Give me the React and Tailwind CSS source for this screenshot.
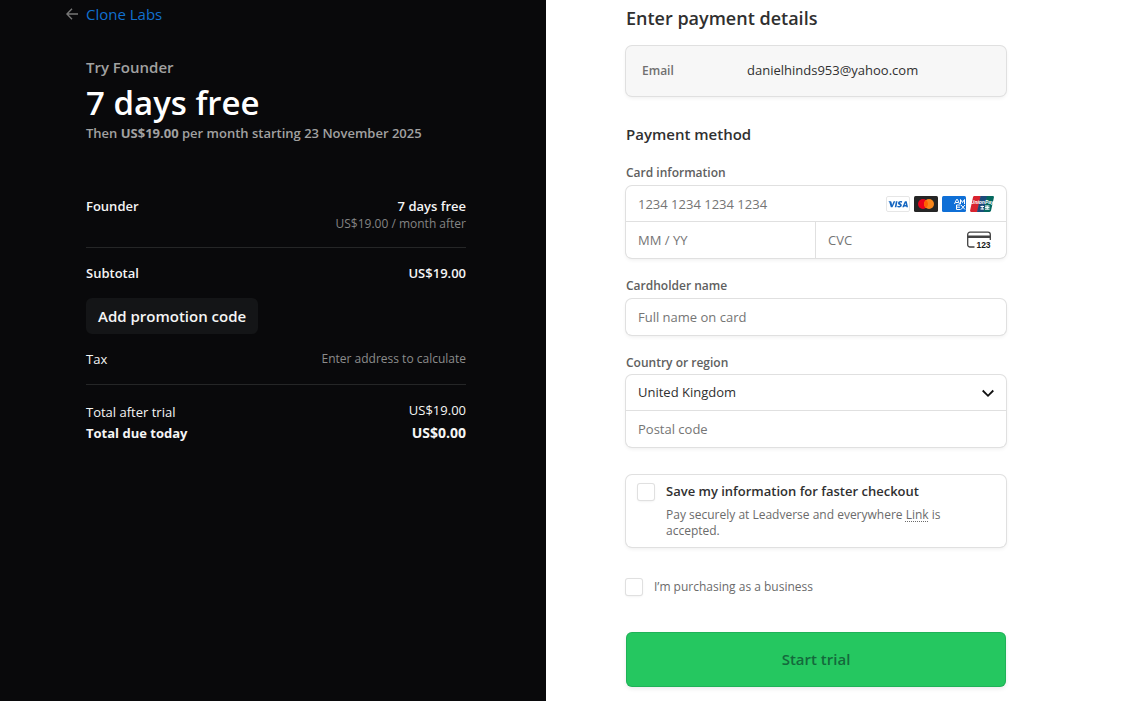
import React, { useState } from "react";

const VisaIcon = () => (
  <svg viewBox="0 0 24 16" className="w-6 h-4" role="img" aria-label="Visa">
    <rect x="0.5" y="0.5" width="23" height="15" rx="1.5" fill="#fff" stroke="#e6e6e6" />
    <path d="M2.600 5.200h2.100c.4 0 .6.200.7.600l.7 3.200L7.600 5.200h1.700L6.500 11.300H4.800L3.400 6.400c0-.2-.2-.4-.8-.6z" fill="#1465c0" />
    <path d="M9.900 5.200h1.600l-1.100 6.100H8.800z" fill="#1465c0" />
    <path d="M16.200 5.400l-.3 1.300c-1-.4-2.100-.4-2.100.1 0 .7 2 .8 2 2.400 0 1.400-1.200 2.200-2.700 2.200-.9 0-1.600-.2-1.900-.4l.3-1.300c.9.500 2.500.600 2.500-.1 0-.8-2-.8-2-2.300 0-1.300 1.200-2.200 2.600-2.200.7 0 1.300.1 1.600.3z" fill="#1465c0" />
    <path d="M19.200 5.200h1.500l1.300 6.100h-1.500l-.2-.9h-2l-.4.900h-1.600l2.300-5.500c.1-.4.3-.6.600-.6zm.3 1.900l-.8 2h1.200z" fill="#1465c0" />
  </svg>
);

const MastercardIcon = () => (
  <svg viewBox="0 0 24 16" className="w-6 h-4" role="img" aria-label="Mastercard">
    <rect width="24" height="16" rx="1.5" fill="#252525" />
    <circle cx="9" cy="8" r="5" fill="#eb001b" />
    <circle cx="15" cy="8" r="5" fill="#f7861b" />
    <path d="M12 4a5 5 0 0 1 0 8 5 5 0 0 1 0-8z" fill="#ff5f00" />
  </svg>
);

const AmexIcon = () => (
  <svg viewBox="0 0 24 16" className="w-6 h-4" role="img" aria-label="American Express">
    <rect width="24" height="16" rx="1.5" fill="#0f6fd6" />
    <g fill="none" stroke="#fff" strokeWidth="1">
      <path d="M12.500 8l2-4.500h1l2 4.500M13.500 6.500h3" />
      <path d="M18.500 8V3.500l2 3 2-3V8" />
      <path d="M18.500 9h-4v4.500h4M14.500 11.200h3.500" />
      <path d="M19 9l4 4.500M23 9l-4 4.500" />
    </g>
  </svg>
);

const UnionPayIcon = () => (
  <svg viewBox="0 0 24 16" className="w-6 h-4" role="img" aria-label="UnionPay">
    <path d="M4.500 0H11L7.500 16H1.200C.4 16-.1 15.300.1 14.500L3 1.200C3.200.5 3.800 0 4.500 0z" fill="#d8232f" />
    <path d="M10.500 0h7L14 16H7z" fill="#1c4a7b" />
    <path d="M17 0h5.800c.8 0 1.300.7 1.100 1.500L21 14.800c-.2.700-.8 1.200-1.500 1.200h-6z" fill="#04685f" />
    <text x="12.300" y="8.300" textAnchor="middle" fontSize="5" fontWeight="700" fontStyle="italic" fill="#fff" fontFamily="Liberation Sans, sans-serif">
      UnionPay
    </text>
    <path d="M10.500 10.500h3.500M12.200 9.700v3.600M10.500 13h3.500M15 10h4.500M15 11.600h4.500M17.200 9.700v3.600M15 13.200h4.500" stroke="#fff" strokeWidth="1" fill="none" />
  </svg>
);

const CvcIcon = () => (
  <svg viewBox="0 0 24 18" className="w-6 h-[18px] shrink-0" aria-hidden="true">
    <path d="M7.500 16H3A2.300 2.300 0 0 1 .7 13.700V3.500A2.300 2.300 0 0 1 3 1.200h18a2.300 2.300 0 0 1 2.300 2.300V9" fill="none" stroke="#424242" strokeWidth="1.300" />
    <path d="M.7 4.500h22.600v2.500H.7z" fill="#424242" />
    <text x="16.500" y="17" textAnchor="middle" fontSize="8.500" fontWeight="700" fill="#1a1a1a" fontFamily="Liberation Sans, sans-serif">
      123
    </text>
  </svg>
);

const box = "rounded-md ring-1 ring-[#e0e0e0] shadow-[0_2px_4px_rgba(0,0,0,0.07)]";
const field =
  "block w-full px-3 bg-transparent text-[13px] text-[#303030] placeholder:text-[#757575] outline-none";
const label = "block text-xs leading-4 font-semibold text-[#606060]";
const checkbox =
  "appearance-none block size-4 shrink-0 rounded-xs bg-white ring-1 ring-[#e0e0e0] shadow-[0_1px_3px_rgba(0,0,0,0.1)] checked:bg-[#0074d4]";

const Summary = () => (
  <section className="flex justify-end bg-[#09090b] pl-5 pr-20">
    <div className="w-full max-w-[400px] pt-1 text-[13px] leading-5 text-[#f5f5f5]">
      <a href="#" className="flex items-center gap-2 text-[15px] text-[#1170cf]">
        <svg viewBox="0 0 12 12" className="size-3" fill="none" stroke="#777" strokeWidth="1.4" aria-hidden="true">
          <path d="M12 6H1M6 .8L.9 6 6 11.200" />
        </svg>
        Clone Labs
      </a>

      <div className="pl-5">
        <p className="mt-[31px] text-[15px] leading-6 font-semibold text-[#a1a1a1]">Try Founder</p>
        <h1 className="mt-1 text-[33px] leading-10 font-semibold text-white">7 days free</h1>
        <p className="font-semibold text-[#a1a1a1]">
          Then <span className="font-bold">US$19.00</span> per month starting 23 November 2025
        </p>

        <div className="mt-[53px] flex justify-between font-semibold">
          <span>Founder</span>
          <span>7 days free</span>
        </div>
        <p className="text-right text-xs leading-4 text-[#848484]">US$19.00 / month after</p>

        <div className="mt-[15px] border-t border-[#252627] pt-[15px] flex justify-between font-semibold">
          <span>Subtotal</span>
          <span>US$19.00</span>
        </div>
        <button type="button" className="mt-[15px] h-9 px-3 rounded-md bg-[#141517] text-[15px] font-semibold">
          Add promotion code
        </button>
        <div className="mt-[15px] flex justify-between">
          <span>Tax</span>
          <span className="text-xs leading-5 text-[#8c8c8c]">Enter address to calculate</span>
        </div>

        <div className="mt-[15px] border-t border-[#252627] pt-[15px] flex justify-between">
          <span className="pt-0.5">Total after trial</span>
          <span>US$19.00</span>
        </div>
        <div className="mt-px flex justify-between font-bold">
          <span>Total due today</span>
          <span className="text-sm leading-5">US$0.00</span>
        </div>
      </div>
    </div>
  </section>
);

const App = () => {
  const [country, setCountry] = useState("United Kingdom");
  const countries = ["United Kingdom", "United States", "Ireland", "France", "Germany"];

  return (
    <main className="grid min-h-screen grid-cols-[546fr_577fr] bg-white font-['Open_Sans','Noto_Sans',sans-serif]">
      <Summary />

      <form className="pl-20 pr-5 pb-3" onSubmit={(e) => e.preventDefault()}>
        <div className="w-full max-w-[380px]">
          <h2 className="pt-1.5 text-lg leading-6 font-semibold text-[#303030]">Enter payment details</h2>
          <div className={`mt-4 flex h-[50px] items-center px-4 bg-[#f7f7f7] ${box}`}>
            <span className="w-[105px] text-xs font-semibold text-[#707070]">Email</span>
            <span className="text-[13px] text-[#303030]">danielhinds953@yahoo.com</span>
          </div>

          <h3 className="mt-7 text-[15px] leading-5 font-semibold text-[#303030]">Payment method</h3>

          <label htmlFor="card-number" className={`mt-[21px] ${label}`}>Card information</label>
          <div className={`mt-[5px] ${box}`}>
            <div className="flex h-9 items-center border-b border-[#e0e0e0] pr-3">
              <input id="card-number" className={`h-full ${field}`} placeholder="1234 1234 1234 1234" />
              <div className="flex shrink-0 gap-1">
                <VisaIcon />
                <MastercardIcon />
                <AmexIcon />
                <UnionPayIcon />
              </div>
            </div>
            <div className="grid grid-cols-2">
              <input aria-label="Expiry date" className={`h-9 border-r border-[#e0e0e0] ${field}`} placeholder="MM / YY" />
              <div className="flex items-center pr-[15px]">
                <input aria-label="CVC" className={`h-9 ${field}`} placeholder="CVC" />
                <CvcIcon />
              </div>
            </div>
          </div>

          <label htmlFor="name" className={`mt-5 ${label}`}>Cardholder name</label>
          <div className={`mt-[5px] ${box}`}>
            <input id="name" className={`h-9 ${field}`} placeholder="Full name on card" />
          </div>

          <label htmlFor="country" className={`mt-5 ${label}`}>Country or region</label>
          <div className={`mt-1 ${box}`}>
            <div className="relative h-9 border-b border-[#e0e0e0]">
              <select
                id="country"
                value={country}
                onChange={(e) => setCountry(e.target.value)}
                className={`h-full appearance-none ${field}`}
              >
                {countries.map((name) => (
                  <option key={name}>{name}</option>
                ))}
              </select>
              <svg
                viewBox="0 0 12 12"
                className="pointer-events-none absolute right-3 top-3 size-3"
                fill="none"
                stroke="#111"
                strokeWidth="1.8"
                aria-hidden="true"
              >
                <path d="M.7 3.500L6 8.800l5.300-5.300" />
              </svg>
            </div>
            <input aria-label="Postal code" className={`h-9 ${field}`} placeholder="Postal code" />
          </div>

          <div className={`mt-7 flex gap-3 px-3 pt-2 pb-2 ${box}`}>
            <input id="save-info" type="checkbox" className={`mt-px ${checkbox}`} />
            <div>
              <label htmlFor="save-info" className="block text-[13px] leading-4 font-semibold text-[#303030]">
                Save my information for faster checkout
              </label>
              <p className="mt-2 max-w-[300px] text-xs leading-4 text-[#6b6b6b]">
                Pay securely at Leadverse and everywhere{" "}
                <a href="#" className="underline decoration-dotted underline-offset-2">Link</a> is accepted.
              </p>
            </div>
          </div>

          <div className="mt-8 flex items-center gap-3">
            <input id="business" type="checkbox" className={checkbox} />
            <label htmlFor="business" className="text-xs leading-4 text-[#6b6b6b]">
              I’m purchasing as a business
            </label>
          </div>

          <button
            type="submit"
            className="mt-[37px] h-[55px] w-full rounded-md bg-[#25c760] text-[15px] font-semibold text-[#14693c] shadow-[inset_0_0_0_1px_rgba(20,130,70,0.3),0_2px_4px_rgba(0,0,0,0.08)]"
          >
            Start trial
          </button>
        </div>
      </form>
    </main>
  );
};

export default App;
